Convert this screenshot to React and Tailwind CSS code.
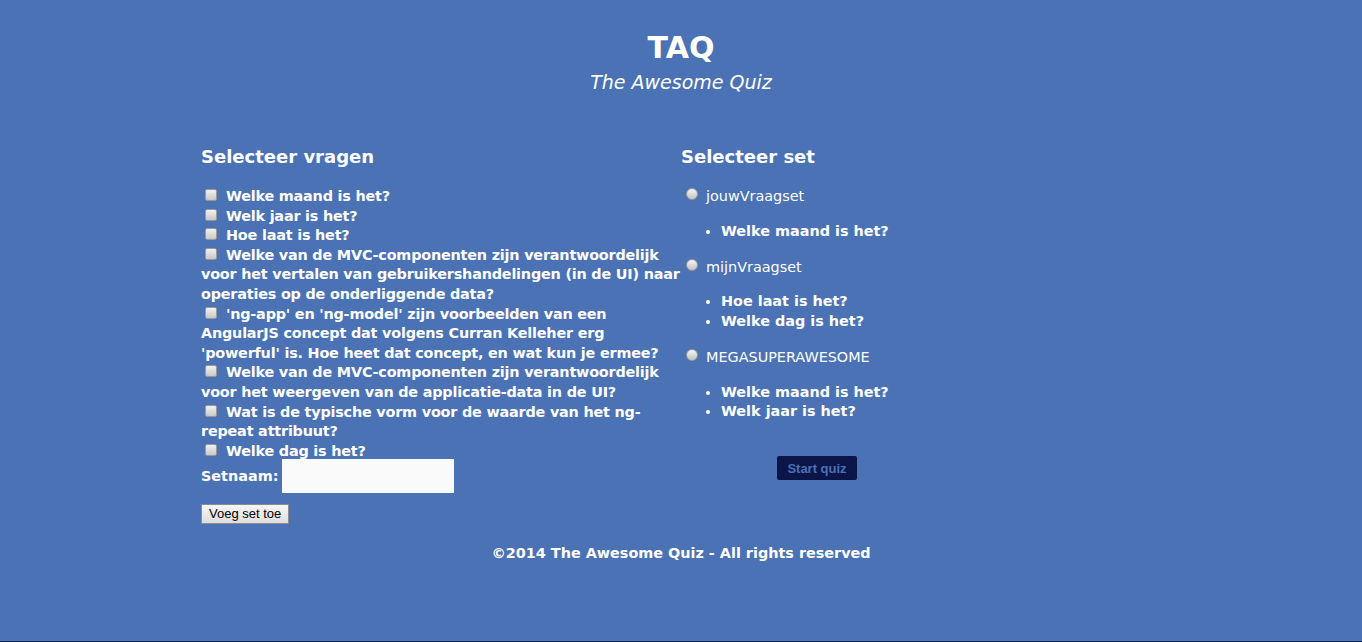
import React from "react";

const questions = [
  "Welke maand is het?",
  "Welk jaar is het?",
  "Hoe laat is het?",
  "Welke van de MVC-componenten zijn verantwoordelijk voor het vertalen van gebruikershandelingen (in de UI) naar operaties op de onderliggende data?",
  "'ng-app' en 'ng-model' zijn voorbeelden van een AngularJS concept dat volgens Curran Kelleher erg 'powerful' is. Hoe heet dat concept, en wat kun je ermee?",
  "Welke van de MVC-componenten zijn verantwoordelijk voor het weergeven van de applicatie-data in de UI?",
  "Wat is de typische vorm voor de waarde van het ng-repeat attribuut?",
  "Welke dag is het?",
];

const sets = [
  { name: "jouwVraagset", items: ["Welke maand is het?"] },
  { name: "mijnVraagset", items: ["Hoe laat is het?", "Welke dag is het?"] },
  { name: "MEGASUPERAWESOME", items: ["Welke maand is het?", "Welk jaar is het?"] },
];

function Checkbox() {
  return (
    <span className="inline-block w-[12px] h-[12px] ml-[4px] mr-[9px] align-[0px] rounded-[2px] border border-[#9a9a9a] bg-gradient-to-b from-[#f2f2f2] to-[#c8c8c8]" />
  );
}

function Radio() {
  return (
    <span className="inline-block w-[12px] h-[12px] ml-[5px] mr-[8px] align-[1px] rounded-full border border-[#9a9a9a] bg-gradient-to-b from-[#f4f4f4] to-[#c4c4c4]" />
  );
}

export default function App() {
  return (
    <div className="min-h-[642px] bg-[#4a72b5] text-white font-['DejaVu_Sans',sans-serif] font-bold border-b border-[#1b2a48]">
      {/* Header */}
      <header className="text-center pt-[30px]">
        <h1 className="text-[30px] leading-[36px]">TAQ</h1>
        <p className="italic font-normal text-[19px] leading-[24px] mt-[4px]">The Awesome Quiz</p>
      </header>

      <main className="w-[960px] mx-auto flex mt-[51px]">
        {/* Left column */}
        <section className="w-[480px]">
          <h2 className="text-[18px] leading-[24px]">Selecteer vragen</h2>
          <ul className="mt-[18px] text-[14.4px] leading-[19.6px] tracking-[-0.2px]">
            {questions.map((q, i) => (
              <li key={i}>
                <Checkbox />
                {q}
              </li>
            ))}
          </ul>
          <div className="flex items-center mt-[-2px]">
            <span className="text-[14.4px] mr-[4px]">Setnaam:</span>
            <div className="w-[172px] h-[34px] bg-[#fafafa]" />
          </div>
          <button className="mt-[11px] h-[20px] px-[7px] text-[13px] leading-[16px] font-normal text-black font-['Liberation_Sans',sans-serif] border border-[#8c8c8c] bg-gradient-to-b from-[#f6f6f6] to-[#dedede]">
            Voeg set toe
          </button>
        </section>

        {/* Right column */}
        <section className="flex-1">
          <h2 className="text-[18px] leading-[24px]">Selecteer set</h2>
          <div className="mt-[18px] text-[14.4px] leading-[19.6px]">
            {sets.map((s) => (
              <div key={s.name} className="mb-[16.5px]">
                <div className="font-normal">
                  <Radio />
                  {s.name}
                </div>
                <ul className="mt-[15px] list-disc pl-[40px]">
                  {s.items.map((it, i) => (
                    <li key={i}>{it}</li>
                  ))}
                </ul>
              </div>
            ))}
          </div>
          <button className="ml-[96px] mt-[18px] w-[80px] h-[24px] rounded-[2px] bg-[#0b1548] text-[#4a72b5] text-[13px] font-bold font-['Liberation_Sans',sans-serif]">
            Start quiz
          </button>
        </section>
      </main>

      <footer className="text-center text-[14.4px] mt-[18px]">
        ©2014 The Awesome Quiz - All rights reserved
      </footer>
    </div>
  );
}
